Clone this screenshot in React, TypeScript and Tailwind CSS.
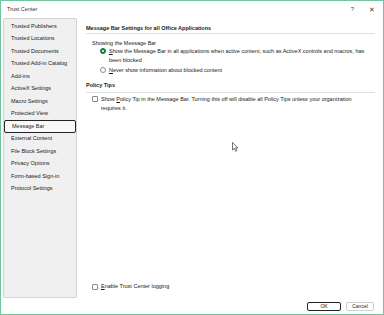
import React from 'react';

const items = [
  'Trusted Publishers',
  'Trusted Locations',
  'Trusted Documents',
  'Trusted Add-in Catalog',
  'Add-ins',
  'ActiveX Settings',
  'Macro Settings',
  'Protected View',
  'Message Bar',
  'External Content',
  'File Block Settings',
  'Privacy Options',
  'Form-based Sign-in',
  'Protocol Settings',
];

const Radio = ({ checked }: { checked?: boolean }) => (
  <span
    className={`mt-[1.5px] flex h-[6px] w-[6px] shrink-0 items-center justify-center rounded-full border ${
      checked ? 'border-[#107c41] bg-[#107c41]' : 'border-[#8a8a8a] bg-white'
    }`}
  >
    {checked && <span className="h-[2.5px] w-[2.5px] rounded-full bg-white" />}
  </span>
);

const Check = () => (
  <span className="mt-[1.5px] h-[6px] w-[6px] shrink-0 rounded-[1px] border border-[#8a8a8a] bg-white" />
);

export default function App() {
  return (
    <div
      className="flex h-[315px] w-[384px] flex-col border border-[#72c49c] bg-white text-[5.5px] leading-[7px] text-[#1a1a1a]"
      style={{ fontFamily: '"Liberation Sans", Arial, sans-serif' }}
    >
      <div className="flex h-[16px] shrink-0 items-center justify-between pl-[6px] pr-[8px]">
        <span className="text-[5.5px] text-[#333]">Trust Center</span>
        <div className="flex items-center gap-[15px] text-[6px] text-[#444]">
          <span>?</span>
          <span className="text-[7px]">✕</span>
        </div>
      </div>
      <div className="flex min-h-0 flex-1 pl-[2px] pr-[8px] pt-[1px]">
        <div className="flex w-[74px] shrink-0 flex-col rounded-[2px] border border-[#d4d4d4] bg-[#f0f0f0] pt-[1px]">
          {items.map((it) => (
            <div
              key={it}
              className={`flex h-[12.5px] items-center pl-[7px] ${
                it === 'Message Bar' ? 'rounded-[2px] border border-[#222] bg-[#f8f8f8]' : ''
              }`}
            >
              {it}
            </div>
          ))}
        </div>
        <div className="flex flex-1 flex-col pb-[7px] pl-[9px] pt-[6px] leading-[9px]">
          <div className="border-b border-[#e0e0e0] font-bold">Message Bar Settings for all Office Applications</div>
          <div className="mt-[4.5px] pl-[6px]">Showing the Message Bar</div>
          <div className="mt-[-1px] flex gap-[3px] pl-[14px]">
            <Radio checked />
            <div>
              <u>S</u>how the Message Bar in all applications when active content, such as ActiveX controls and macros, has been blocked
            </div>
          </div>
          <div className="mt-[1px] flex gap-[3px] pl-[14px]">
            <Radio />
            <div>
              <u>N</u>ever show information about blocked content
            </div>
          </div>
          <div className="mt-[6px] border-b border-[#e0e0e0] pb-[2px] font-bold">Policy Tips</div>
          <div className="mt-[2px] flex gap-[3px] pl-[6px] pr-[12px]">
            <Check />
            <div>
              Show <u>P</u>olicy Tip in the Message Bar. Turning this off will disable all Policy Tips unless your organization requires it.
            </div>
          </div>
          <div className="relative flex-1">
            <svg className="absolute left-[146px] top-[29px]" width="7" height="10" viewBox="0 0 7 10">
              <path d="M0.5 0.5 L0.5 8 L2.3 6.3 L3.6 9.2 L4.8 8.7 L3.6 5.9 L6 5.9 Z" fill="white" stroke="#333" strokeWidth="0.7" />
            </svg>
          </div>
          <div className="flex gap-[3px] pl-[6px]">
            <Check />
            <div>
              <u>E</u>nable Trust Center logging
            </div>
          </div>
        </div>
      </div>
      <div className="flex shrink-0 justify-end gap-[5px] pb-[3px] pr-[9px] pt-[4px]">
        <button className="h-[9px] w-[34px] rounded-[2px] border border-[#222] bg-white text-[5px] leading-none">OK</button>
        <button className="h-[9px] w-[28px] rounded-[2px] border border-[#cfcfcf] bg-white text-[5px] leading-none">Cancel</button>
      </div>
    </div>
  );
}
